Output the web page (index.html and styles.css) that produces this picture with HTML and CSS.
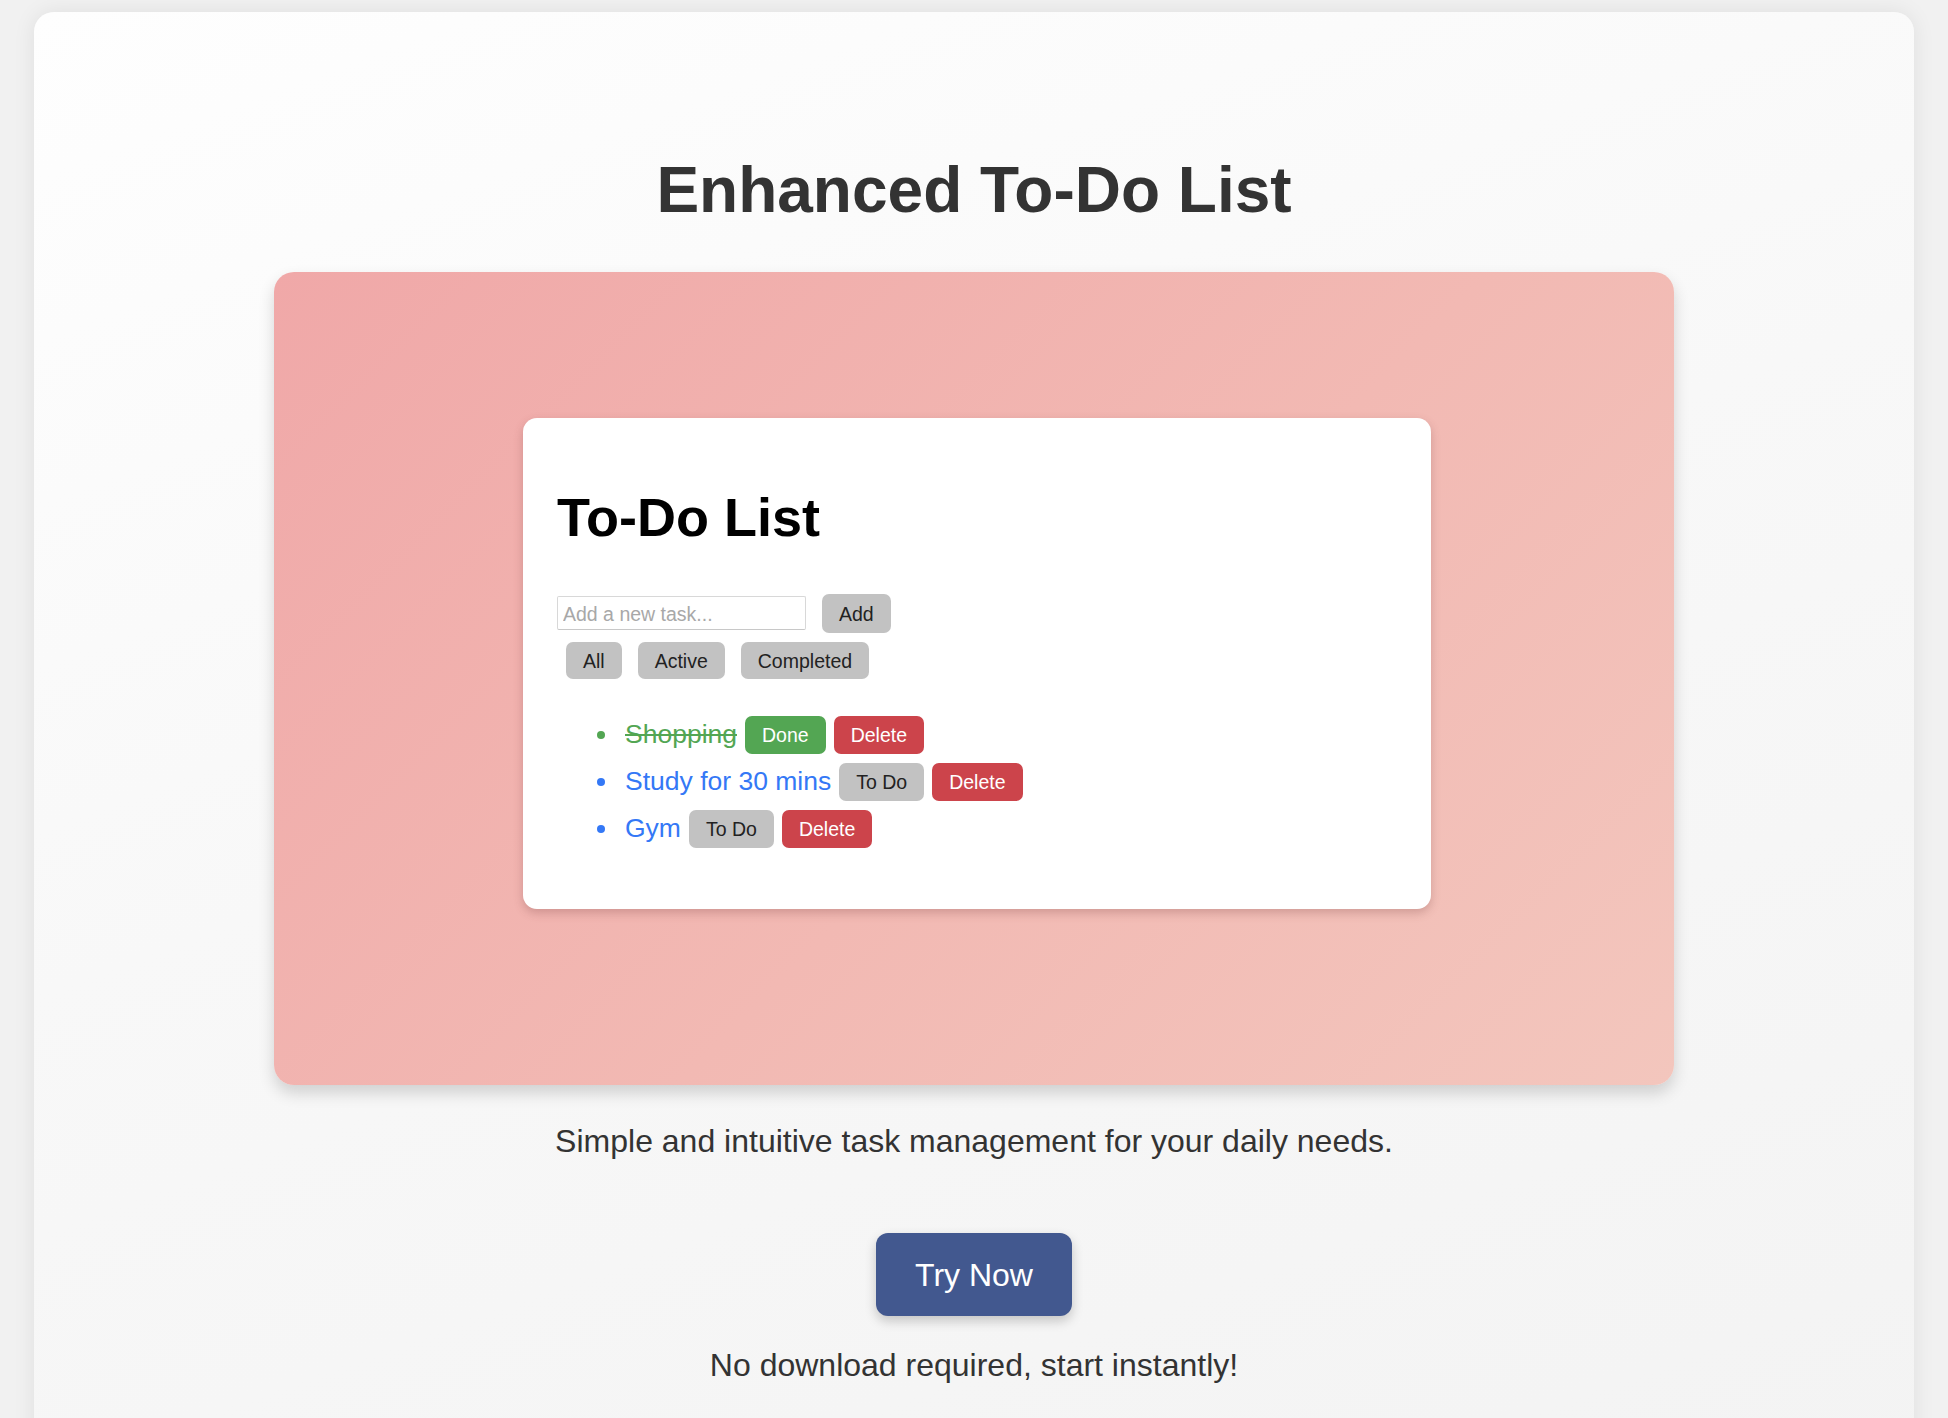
FILE: index.html
```html
<!DOCTYPE html>
<html lang="en">
<head>
<meta charset="utf-8">
<title>Enhanced To-Do List</title>
<link rel="stylesheet" href="styles.css">
</head>
<body>
<main class="page">
  <h1 class="title">Enhanced To-Do List</h1>
  <section class="preview">
    <div class="app">
      <h2 class="app-title">To-Do List</h2>
      <div class="add-row">
        <input class="task-input" type="text" placeholder="Add a new task...">
        <button class="btn btn-gray btn-add">Add</button>
      </div>
      <div class="filters">
        <button class="btn btn-gray btn-filter">All</button>
        <button class="btn btn-gray btn-filter">Active</button>
        <button class="btn btn-gray btn-filter">Completed</button>
      </div>
      <ul class="tasks">
        <li class="task task-done"><span class="task-text">Shopping</span><button class="btn btn-green">Done</button><button class="btn btn-red">Delete</button></li>
        <li class="task"><span class="task-text">Study for 30 mins</span><button class="btn btn-gray">To Do</button><button class="btn btn-red">Delete</button></li>
        <li class="task"><span class="task-text">Gym</span><button class="btn btn-gray">To Do</button><button class="btn btn-red">Delete</button></li>
      </ul>
    </div>
  </section>
  <p class="tagline">Simple and intuitive task management for your daily needs.</p>
  <button class="cta">Try Now</button>
  <p class="note">No download required, start instantly!</p>
</main>
</body>
</html>
```
FILE: styles.css
```css
* { box-sizing: border-box; }

html, body {
  margin: 0;
  padding: 0;
}

body {
  background: #f1f1f1;
  font-family: "Liberation Sans", Arial, Helvetica, sans-serif;
  line-height: 1.15;
  color: #333;
  overflow: hidden;
}

.page {
  margin: 12px 34px 0;
  min-height: 1500px;
  border-radius: 20px;
  background: linear-gradient(160deg, #fefefe 0%, #f8f8f8 45%, #f3f3f3 100%);
  box-shadow: 0 0 22px rgba(0, 0, 0, 0.08);
  display: flex;
  flex-direction: column;
  align-items: center;
  padding-top: 142px;
}

.title {
  margin: 0 0 44px;
  font-size: 64px;
  font-weight: 700;
  color: #333;
  line-height: 1.15;
}

.preview {
  width: 1400px;
  padding: 146px 243px 176px 249px;
  border-radius: 20px;
  background: linear-gradient(135deg, #f0a8a8 0%, #f2b9b3 55%, #f3c6bd 100%);
  box-shadow: 0 8px 16px rgba(0, 0, 0, 0.16);
}

.app {
  background: #fff;
  border-radius: 14px;
  padding: 68px 34px 61px;
  box-shadow: 0 4px 10px rgba(120, 60, 60, 0.28);
}

.app-title {
  margin: 0 0 46px;
  font-size: 54px;
  font-weight: 700;
  color: #000;
  line-height: 62px;
}

.add-row {
  display: flex;
  align-items: center;
  gap: 16px;
  height: 39px;
}

.task-input {
  width: 249px;
  height: 34px;
  border: 1px solid #d8d8d8;
  border-bottom-color: #c8c8c8;
  border-radius: 2px;
  padding: 2px 5px 0;
  font-family: "Liberation Sans", Arial, sans-serif;
  font-size: 19.5px;
  color: #333;
  background: #fff;
}

.task-input::placeholder {
  color: #a8a8a8;
}

.btn {
  border: none;
  border-radius: 7px;
  font-family: "Liberation Sans", Arial, sans-serif;
  font-size: 19.5px;
  padding: 3px 17px 0;
  height: 38px;
  line-height: 1;
  cursor: pointer;
}

.btn-gray { background: #c2c2c2; color: #222; }
.btn-green { background: #53a653; color: #fff; }
.btn-red { background: #cc444b; color: #fff; }

.btn-add { height: 39px; }

.filters {
  display: flex;
  gap: 16px;
  margin: 9px 0 0 9px;
}

.btn-filter { height: 37px; }

.tasks {
  list-style: none;
  margin: 37px 0 0;
  padding: 0 0 0 40px;
}

.task {
  display: flex;
  align-items: center;
  height: 38px;
  margin-bottom: 9px;
  color: #3478f6;
}

.task:last-child { margin-bottom: 0; }

.task::before {
  content: "";
  width: 8px;
  height: 8px;
  border-radius: 50%;
  background: currentColor;
  margin-right: 20px;
  flex: none;
}

.task-done { color: #53a653; }

.task-text {
  font-size: 26.5px;
  margin-right: 8px;
}

.task-done .task-text { text-decoration: line-through; }

.task .btn + .btn { margin-left: 8px; }

.tagline {
  margin: 38px 0 0;
  font-size: 32px;
  color: #333;
}

.cta {
  margin-top: 74px;
  height: 83px;
  padding: 2px 39px 0;
  border: none;
  border-radius: 12px;
  background: #42588f;
  color: #fff;
  font-family: "Liberation Sans", Arial, sans-serif;
  font-size: 32px;
  box-shadow: 0 5px 12px rgba(0, 0, 0, 0.2);
  cursor: pointer;
}

.note {
  margin: 31px 0 0;
  font-size: 32px;
  color: #333;
}
```
